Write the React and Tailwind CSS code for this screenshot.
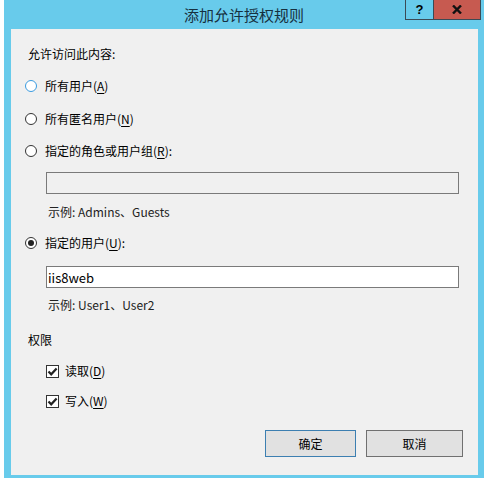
import React, { useState } from "react";

function Radio({ checked, focused }) {
  return (
    <span
      className={`relative flex h-[12px] w-[12px] items-center justify-center rounded-full border bg-white ${
        focused ? "border-[#3a9be0]" : "border-[#333333]"
      }`}
    >
      {checked && <span className="h-[6px] w-[6px] rounded-full bg-[#222222]" />}
    </span>
  );
}

function CheckBox({ checked }) {
  return (
    <span className="flex h-[13px] w-[13px] items-center justify-center border border-[#333333] bg-white">
      {checked && (
        <svg width="11" height="11" viewBox="0 0 11 11">
          <path d="M1.5 5.5 L4.2 8.3 L9.6 2.4" fill="none" stroke="#222" strokeWidth="2.2" />
        </svg>
      )}
    </span>
  );
}

function Mn({ children }) {
  return <span className="underline underline-offset-2">{children}</span>;
}

export default function App() {
  const [who, setWho] = useState("user");
  const [users, setUsers] = useState("iis8web");

  const radios = [
    { id: "all", label: <>所有用户(<Mn>A</Mn>)</>, mt: "mt-[16px]" },
    { id: "anon", label: <>所有匿名用户(<Mn>N</Mn>)</>, mt: "mt-[17px]" },
    { id: "role", label: <>指定的角色或用户组(<Mn>R</Mn>):</>, mt: "mt-[16px]" },
  ];

  return (
    <div className="h-[483px] w-[484px] overflow-hidden bg-white font-['Noto_Sans_CJK_SC',sans-serif] text-[12px] leading-4 text-black">
      <div className="ml-[4px] flex h-[478px] w-[480px] flex-col bg-[#68cbeb]">
        {/* title bar */}
        <div className="relative flex h-[29px] shrink-0 items-center justify-center">
          <span className="pt-[1px] text-[15px] text-[#16303f]">添加允许授权规则</span>
          <div className="absolute right-[3px] top-0 flex h-[20px]">
            <span className="flex w-[28px] items-center justify-center border border-r-0 border-t-0 border-[#3b4a55] font-['Liberation_Sans',sans-serif] text-[13px] font-bold">
              ?
            </span>
            <span className="flex w-[48px] items-center justify-center border border-t-0 border-[#3b4a55] bg-[#c75a50]">
              <svg width="10" height="9" viewBox="0 0 10 9">
                <path d="M1 0.5 L9 8.5 M9 0.5 L1 8.5" stroke="#111" strokeWidth="2.4" />
              </svg>
            </span>
          </div>
        </div>

        {/* body */}
        <div className="ml-[7px] mr-[6px] flex h-[446px] flex-col bg-[#f0f0f0]">
          <div className="ml-[17px] mt-[17px] h-4">允许访问此内容:</div>

          {radios.map((r) => (
            <div
              key={r.id}
              className={`ml-[14px] flex h-4 cursor-default items-center gap-[8px] ${r.mt}`}
              onClick={() => setWho(r.id)}
            >
              <Radio checked={who === r.id} focused={r.id === "all"} />
              <span>{r.label}</span>
            </div>
          ))}

          <div className="ml-[35px] mt-[13px] h-[22px] w-[413px] border border-[#7a7a7a] bg-[#f0f0f0]" />
          <div className="ml-[37px] mt-[10px] h-4 text-[#222]">示例: Admins、Guests</div>

          <div
            className="ml-[14px] mt-[15px] flex h-4 items-center gap-[8px]"
            onClick={() => setWho("user")}
          >
            <Radio checked={who === "user"} />
            <span>
              指定的用户(<Mn>U</Mn>):
            </span>
          </div>

          <input
            value={users}
            onChange={(e) => setUsers(e.target.value)}
            className="ml-[35px] mt-[15px] h-[22px] w-[413px] border border-[#7a7a7a] bg-white px-[1px] text-[13px] outline-none"
          />
          <div className="ml-[37px] mt-[9px] h-4 text-[#222]">示例: User1、User2</div>

          <div className="ml-[17px] mt-[19px] h-4">权限</div>

          <div className="ml-[35px] mt-[15px] flex h-4 items-center gap-[6px]">
            <CheckBox checked />
            <span>
              读取(<Mn>D</Mn>)
            </span>
          </div>
          <div className="ml-[35px] mt-[14px] flex h-4 items-center gap-[6px]">
            <CheckBox checked />
            <span>
              写入(<Mn>W</Mn>)
            </span>
          </div>

          <div className="ml-[254px] mt-[21px] flex gap-[10px]">
            <button className="h-[27px] w-[91px] border border-[#3c7fb1] bg-[#e1e1e1]">确定</button>
            <button className="h-[27px] w-[97px] border border-[#707070] bg-[#e1e1e1]">取消</button>
          </div>
        </div>
      </div>
    </div>
  );
}
